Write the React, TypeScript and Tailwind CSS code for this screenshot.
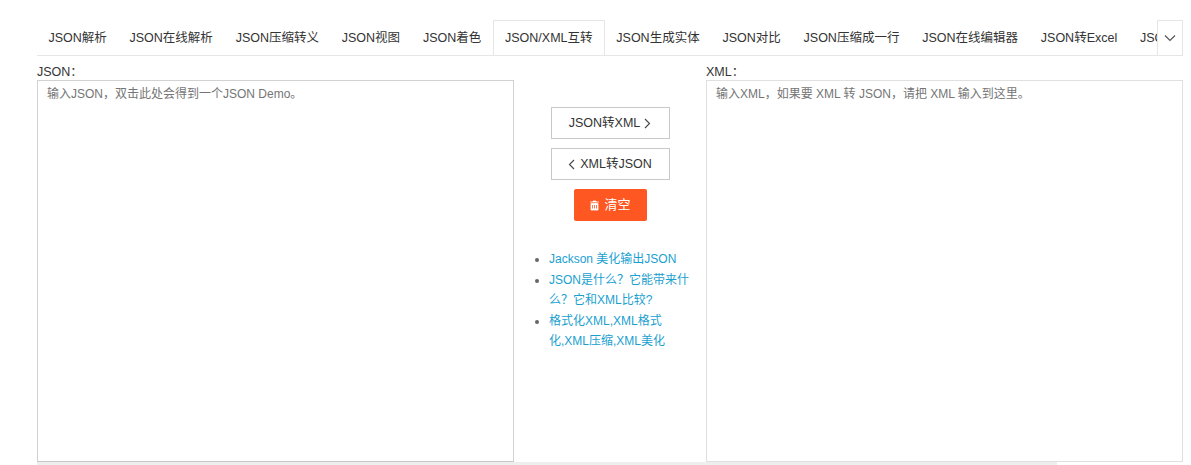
import React from "react";

const tabs = ["JSON解析","JSON在线解析","JSON压缩转义","JSON视图","JSON着色","JSON/XML互转","JSON生成实体","JSON对比","JSON压缩成一行","JSON在线编辑器","JSON转Excel","JSON转换"];

export default function App() {
  return (
    <div className="w-[1191px] h-[465px] bg-white overflow-hidden text-[#333]" style={{fontFamily: '"Liberation Sans","Noto Sans CJK SC",sans-serif'}}>
      <div className="ml-[37px] mt-[20px] w-[1146px] relative">
        <div className="flex h-[36px] border-b border-[#e6e6e6] overflow-hidden w-[1120px]">
          {tabs.map((t, i) => (
            <div key={t} className={`shrink-0 px-[11.4px] h-[36px] flex items-center text-[12.5px] whitespace-nowrap ${i === 5 ? "border border-b-white border-[#e6e6e6] bg-white h-[37px]" : ""}`}>{t}</div>
          ))}
        </div>
        <div className="absolute right-0 top-0 w-[26px] h-[36px] border border-[#e6e6e6] bg-white flex items-center justify-center">
          <svg width="12" height="8" viewBox="0 0 12 8"><path d="M1 1.5l5 5 5-5" stroke="#555" strokeWidth="1.2" fill="none"/></svg>
        </div>
      </div>
      <div className="flex ml-[37px] mt-[8px]">
        <div className="w-[477px] flex flex-col">
          <div className="text-[12.5px] h-[16px] leading-[16px]">JSON：</div>
          <div className="h-[382px] border border-[#d2d2d2] border-b-[#c8c8c8] px-[9px] py-[4px] text-[12px] text-[#757575]">输入JSON，双击此处会得到一个JSON Demo。</div>
        </div>
        <div className="w-[192px] flex flex-col items-center pt-[43px]">
          <div className="w-[119px] h-[32px] border border-[#c9c9c9] flex items-center justify-center text-[12.5px] gap-[4px]">JSON转XML <svg width="7" height="11" viewBox="0 0 7 11"><path d="M1 1l4.5 4.5L1 10" stroke="#444" strokeWidth="1.1" fill="none"/></svg></div>
          <div className="w-[119px] h-[32px] mt-[9px] border border-[#c9c9c9] flex items-center justify-center text-[12.5px] gap-[5px]"><svg width="7" height="11" viewBox="0 0 7 11"><path d="M6 1L1.5 5.5 6 10" stroke="#444" strokeWidth="1.1" fill="none"/></svg>XML转JSON</div>
          <div className="w-[73px] h-[32px] mt-[9px] bg-[#ff5722] rounded-[2px] text-white text-[13px] flex items-center justify-center gap-[4px]">
            <svg width="11" height="11" viewBox="0 0 11 11"><path d="M1 2h9M4 2V1h3v1M2 3.5h7V10H2z" fill="#fff" stroke="#fff" strokeWidth="0.8"/><path d="M3.5 5v3.5M5.5 5v3.5M7.5 5v3.5" stroke="#ff5722" strokeWidth="0.8"/></svg>清空
          </div>
          <ul className="mt-[28px] pl-[35px] w-full list-disc marker:text-[#666] text-[12px] leading-[20px] text-[#1a9fd0]">
            <li className="mb-[1px]">Jackson 美化输出JSON</li>
            <li className="mb-[1px] pr-[16px]">JSON是什么？它能带来什么？它和XML比较?</li>
            <li className="pr-[16px]">格式化XML,XML格式化,XML压缩,XML美化</li>
          </ul>
        </div>
        <div className="w-[477px] flex flex-col">
          <div className="text-[12.5px] h-[16px] leading-[16px]">XML：</div>
          <div className="h-[382px] border border-[#e0e0e0] px-[9px] py-[4px] text-[12px] text-[#757575]">输入XML，如果要 XML 转 JSON，请把 XML 输入到这里。</div>
        </div>
      </div>
      <div className="ml-[37px] w-[1020px] h-[4px] bg-[#eeeeee]" />
    </div>
  );
}
